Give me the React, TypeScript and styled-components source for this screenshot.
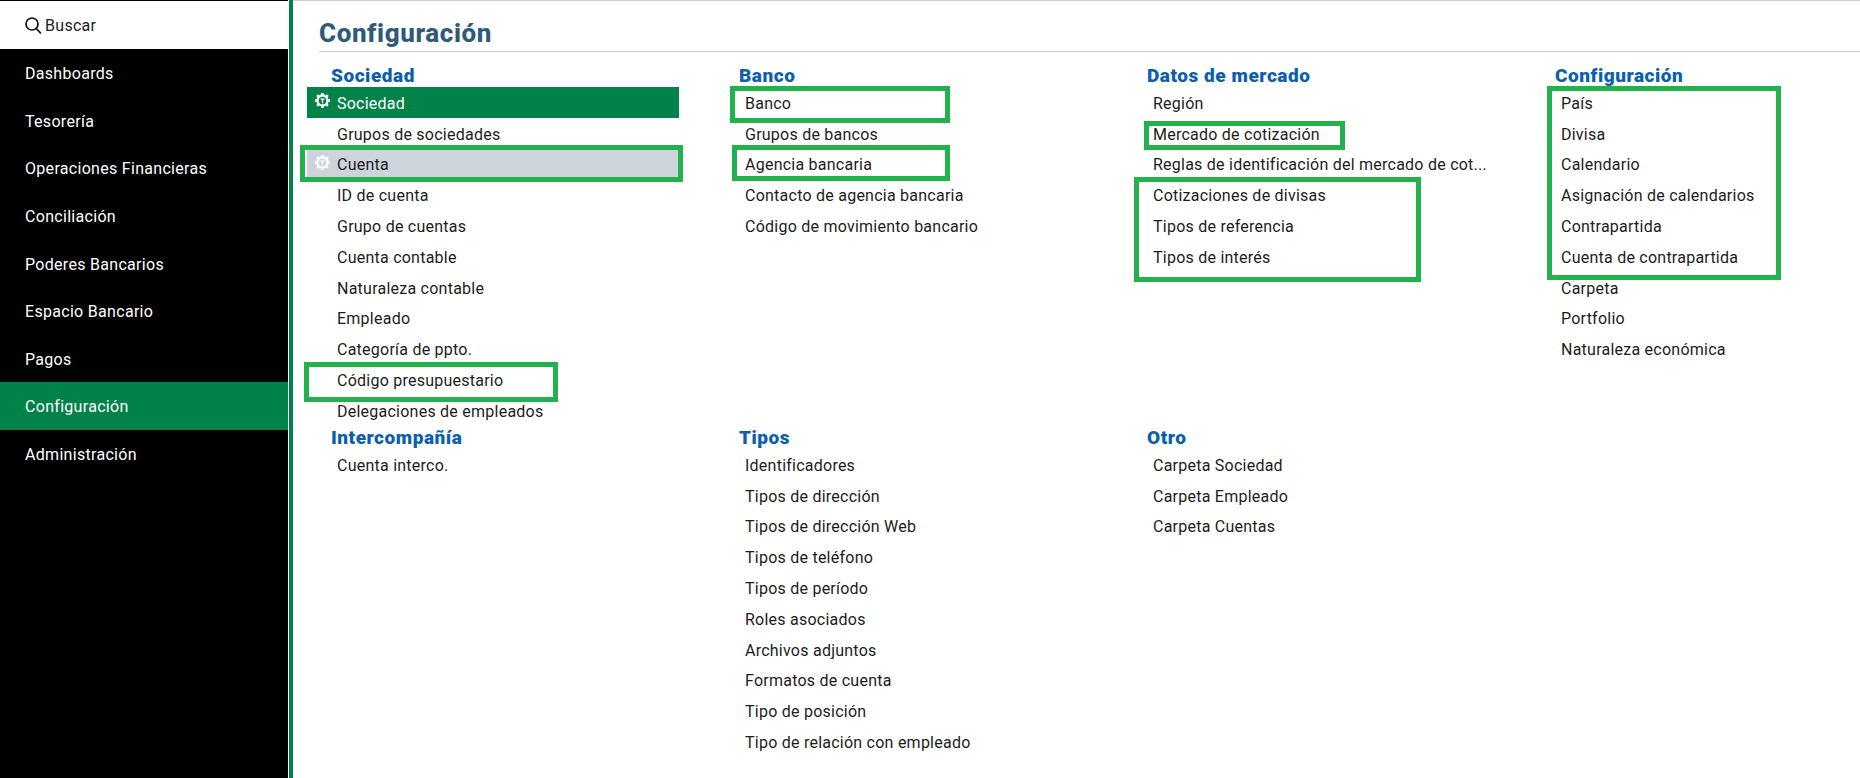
import React from "react";
import styled, { createGlobalStyle } from "styled-components";

const Global = createGlobalStyle`
  html, body { margin: 0; padding: 0; background: #fff; }
  body { font-family: Roboto, "Liberation Sans", sans-serif; }
  * { box-sizing: border-box; }
`;

const Page = styled.div`
  display: flex;
  width: 1860px;
  height: 778px;
  overflow: hidden;
  position: relative;
`;
const Sidebar = styled.nav`
  width: 288px;
  background: #000;
  padding-top: 1px;
  flex: none;
`;
const Search = styled.div`
  height: 48px;
  background: #fff;
  display: flex;
  align-items: center;
  gap: 3px;
  padding: 0 0 0 24px;
  font-size: 16px;
  letter-spacing: 0.3px;
  color: #222;
`;
const NavItem = styled.div<{ $active?: boolean }>`
  height: 47.6px;
  display: flex;
  align-items: center;
  padding: 2px 0 0 25px;
  font-size: 16px;
  letter-spacing: 0.3px;
  color: #fff;
  background: ${(p) => (p.$active ? "#008248" : "transparent")};
`;
const Divider = styled.div`
  width: 5px;
  flex: none;
  background: #008248;
  border-left: 1px solid #fff;
`;
const Main = styled.main`
  flex: 1;
  border-top: 1px solid #ccc;
  padding: 0 0 0 26px;
`;
const Title = styled.h1`
  margin: 0;
  height: 51px;
  padding-top: 16px;
  font-size: 26px;
  letter-spacing: 0.6px;
  line-height: 32px;
  font-weight: 800;
  color: #2f5b78;
  border-bottom: 1px solid #ccc;
`;
const Columns = styled.div`
  display: grid;
  grid-template-columns: repeat(4, 408px);
  margin-left: -12px;
  padding-top: 14px;
`;
const Column = styled.section`
  display: flex;
  flex-direction: column;
`;
const Group = styled.div<{ $height: number }>`
  height: ${(p) => p.$height}px;
`;
const Heading = styled.h2`
  margin: 0;
  height: 21px;
  padding-left: 24px;
  font-size: 19px;
  letter-spacing: 0.55px;
  line-height: 20px;
  font-weight: 900;
  color: #0a60ae;
`;
const Row = styled.div<{ $variant?: "active" | "hover" }>`
  width: 372px;
  height: 30.8px;
  display: flex;
  align-items: center;
  padding: 2px 0 0 30px;
  position: relative;
  font-size: 16px;
  letter-spacing: 0.24px;
  white-space: nowrap;
  color: ${(p) => (p.$variant === "active" ? "#fff" : "#1c1c1c")};
  background: ${(p) =>
    p.$variant === "active" ? "#008248" : p.$variant === "hover" ? "#cdd4db" : "transparent"};
`;
const GearSlot = styled.span`
  position: absolute;
  left: 7px;
  top: 5px;
  width: 17px;
  height: 17px;
  color: #fff;
`;
const Mark = styled.div<{ $x: number; $y: number; $w: number; $h: number }>`
  position: absolute;
  left: ${(p) => p.$x}px;
  top: ${(p) => p.$y}px;
  width: ${(p) => p.$w}px;
  height: ${(p) => p.$h}px;
  border: 5px solid #22b14c;
  pointer-events: none;
`;

const Gear = () => (
  <svg viewBox="0 0 18 18" width="17" height="17" fill="none" stroke="currentColor">
    <circle cx="9" cy="9" r="5.3" strokeWidth="2.4" />
    <path
      d="M9 1v3M9 14v3M1 9h3M14 9h3M3.3 3.3l2.1 2.1M12.6 12.6l2.1 2.1M3.3 14.7l2.1-2.1M12.6 5.4l2.1-2.1"
      strokeWidth="2.6"
    />
    <path d="M6.3 6.8h5.4L9 9.8z" fill="currentColor" stroke="none" />
    <path d="M9 9v3" strokeWidth="1.3" />
  </svg>
);

const Magnifier = () => (
  <svg viewBox="0 0 18 18" width="18" height="18" fill="none" stroke="#111" strokeWidth="1.7">
    <circle cx="8" cy="8" r="6" />
    <path d="M12.2 12.5 16.4 16.8" strokeLinecap="round" />
  </svg>
);

type Item = { label: string; variant?: "active" | "hover" };
const t = (...labels: string[]): Item[] => labels.map((label) => ({ label }));

const nav = [
  "Dashboards",
  "Tesorería",
  "Operaciones Financieras",
  "Conciliación",
  "Poderes Bancarios",
  "Espacio Bancario",
  "Pagos",
  "Configuración",
  "Administración",
];

const columns: { title: string; items: Item[] }[][] = [
  [
    {
      title: "Sociedad",
      items: [
        { label: "Sociedad", variant: "active" },
        { label: "Grupos de sociedades" },
        { label: "Cuenta", variant: "hover" },
        ...t(
          "ID de cuenta",
          "Grupo de cuentas",
          "Cuenta contable",
          "Naturaleza contable",
          "Empleado",
          "Categoría de ppto.",
          "Código presupuestario",
          "Delegaciones de empleados"
        ),
      ],
    },
    { title: "Intercompañía", items: t("Cuenta interco.") },
  ],
  [
    {
      title: "Banco",
      items: t(
        "Banco",
        "Grupos de bancos",
        "Agencia bancaria",
        "Contacto de agencia bancaria",
        "Código de movimiento bancario"
      ),
    },
    {
      title: "Tipos",
      items: t(
        "Identificadores",
        "Tipos de dirección",
        "Tipos de dirección Web",
        "Tipos de teléfono",
        "Tipos de período",
        "Roles asociados",
        "Archivos adjuntos",
        "Formatos de cuenta",
        "Tipo de posición",
        "Tipo de relación con empleado"
      ),
    },
  ],
  [
    {
      title: "Datos de mercado",
      items: t(
        "Región",
        "Mercado de cotización",
        "Reglas de identificación del mercado de cot...",
        "Cotizaciones de divisas",
        "Tipos de referencia",
        "Tipos de interés"
      ),
    },
    { title: "Otro", items: t("Carpeta Sociedad", "Carpeta Empleado", "Carpeta Cuentas") },
  ],
  [
    {
      title: "Configuración",
      items: t(
        "País",
        "Divisa",
        "Calendario",
        "Asignación de calendarios",
        "Contrapartida",
        "Cuenta de contrapartida",
        "Carpeta",
        "Portfolio",
        "Naturaleza económica"
      ),
    },
  ],
];

const marks = [
  { x: 300, y: 145, w: 383, h: 37 },
  { x: 304, y: 362, w: 254, h: 40 },
  { x: 730, y: 86, w: 220, h: 37 },
  { x: 732, y: 145, w: 218, h: 36 },
  { x: 1144, y: 121, w: 201, h: 29 },
  { x: 1134, y: 177, w: 287, h: 105 },
  { x: 1547, y: 86, w: 234, h: 194 },
];

export default function App() {
  return (
    <Page>
      <Global />
      <Sidebar>
        <Search>
          <Magnifier />
          Buscar
        </Search>
        {nav.map((n) => (
          <NavItem key={n} $active={n === "Configuración"}>
            {n}
          </NavItem>
        ))}
      </Sidebar>
      <Divider />
      <Main>
        <Title>Configuración</Title>
        <Columns>
          {columns.map((col, i) => (
            <Column key={i}>
              {col.map((g, j) => (
                <Group key={g.title} $height={j === 0 ? 362 : 300}>
                  <Heading>{g.title}</Heading>
                  {g.items.map((it) => (
                    <Row key={it.label} $variant={it.variant}>
                      {it.variant && (
                        <GearSlot>
                          <Gear />
                        </GearSlot>
                      )}
                      {it.label}
                    </Row>
                  ))}
                </Group>
              ))}
            </Column>
          ))}
        </Columns>
      </Main>
      {marks.map((m) => (
        <Mark key={`${m.x}-${m.y}`} $x={m.x} $y={m.y} $w={m.w} $h={m.h} />
      ))}
    </Page>
  );
}
